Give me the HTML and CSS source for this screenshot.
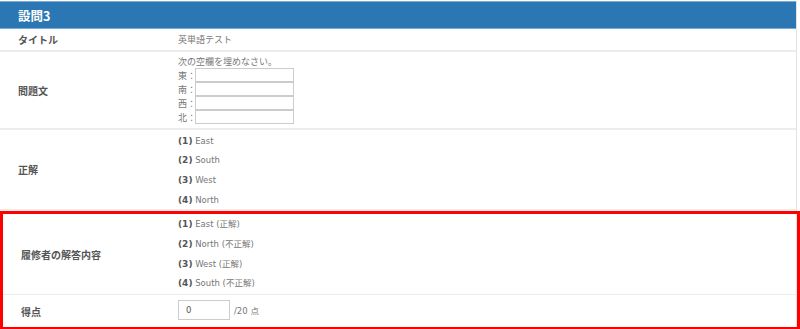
FILE: index.html
```html
<!DOCTYPE html>
<html lang="ja">
<head>
<meta charset="utf-8">
<link rel="stylesheet" href="styles.css">
</head>
<body>
<div class="panel">
  <div class="head">設問3</div>
  <div class="row row-title">
    <div class="label">タイトル</div>
    <div class="value">英単語テスト</div>
  </div>
  <div class="row row-q">
    <div class="label">問題文</div>
    <div class="value qv">
      <div class="qtext">次の空欄を埋めなさい。</div>
      <div class="blank"><span class="dir">東：</span><span class="box"></span></div>
      <div class="blank"><span class="dir">南：</span><span class="box"></span></div>
      <div class="blank"><span class="dir">西：</span><span class="box"></span></div>
      <div class="blank"><span class="dir">北：</span><span class="box"></span></div>
    </div>
  </div>
  <div class="row row-ans">
    <div class="label">正解</div>
    <div class="value list">
      <div class="item"><b>(1)</b> East</div>
      <div class="item"><b>(2)</b> South</div>
      <div class="item"><b>(3)</b> West</div>
      <div class="item"><b>(4)</b> North</div>
    </div>
  </div>
  <div class="highlight">
    <div class="row row-ans inner">
      <div class="label">履修者の解答内容</div>
      <div class="value list">
        <div class="item"><b>(1)</b> East (正解)</div>
        <div class="item"><b>(2)</b> North (不正解)</div>
        <div class="item"><b>(3)</b> West (正解)</div>
        <div class="item"><b>(4)</b> South (不正解)</div>
      </div>
    </div>
    <div class="row row-score inner last">
      <div class="label">得点</div>
      <div class="value score">
        <span class="scorebox">0</span><span class="of">/20 点</span>
      </div>
    </div>
  </div>
</div>
</body>
</html>
```
FILE: styles.css
```css
html, body {
  margin: 0;
  padding: 0;
  background: #fff;
}
body {
  font-family: "DejaVu Sans", "Noto Sans CJK JP", sans-serif;
  font-size: 8.5px;
  color: #666;
}
.panel {
  width: 797px;
  height: 329px;
  border-right: 1px solid #e4e4e4;
  box-sizing: border-box;
}
.head {
  margin-top: 1px;
  height: 26px;
  background: #2b77b3;
  border-top: 1px solid #7aaad6;
  border-bottom: 1px solid #7aaad6;
  color: #fff;
  font-family: "Noto Sans CJK JP", sans-serif;
  font-weight: bold;
  font-size: 12.5px;
  padding-left: 18px;
  display: flex;
  align-items: center;
}
.row {
  display: flex;
  border-bottom: 2px solid #ededed;
}
.label {
  width: 160px;
  padding-left: 18px;
  display: flex;
  align-items: center;
  font-family: "Noto Sans CJK JP", sans-serif;
  font-weight: bold;
  font-size: 10px;
  color: #555;
}
.value {
  display: flex;
  align-items: center;
}
.row-title { height: 21px; }
.row-title .value {
  font-family: "Noto Sans CJK JP", sans-serif;
  font-size: 9px;
  color: #777;
}
.row-q { height: 76px; }
.qv {
  flex-direction: column;
  align-items: flex-start;
  padding-top: 3px;
  font-family: "Noto Sans CJK JP", sans-serif;
  font-size: 9px;
  color: #777;
}
.qtext { height: 13px; line-height: 13px; }
.blank {
  display: flex;
  align-items: center;
  height: 14px;
}
.dir { width: 17px; }
.box {
  width: 97px;
  height: 12px;
  border: 1px solid #ccc;
  background: #fff;
}
.row-ans { height: 79px; }
.list {
  flex-direction: column;
  align-items: flex-start;
  justify-content: center;
  padding-top: 3px;
}
.item {
  height: 19.6px;
  line-height: 19.6px;
  color: #777;
}
.item b {
  color: #555;
  font-weight: bold;
  font-size: 9px;
}
.highlight {
  border: 3px solid #ff0000;
  height: 119px;
  box-sizing: border-box;
  width: 800px;
}
.inner .label { width: 157px; }
.highlight .row-ans { height: 80px; border-bottom-width: 1px; }
.highlight .list { padding-top: 1px; }
.row-score { height: 33px; border-bottom: none; }
.score { color: #777; padding-bottom: 3px; }
.scorebox {
  width: 43px;
  height: 18px;
  border: 1px solid #ccc;
  padding-left: 7px;
  display: flex;
  align-items: center;
  color: #555;
}
.of { margin-left: 4px; }
```
